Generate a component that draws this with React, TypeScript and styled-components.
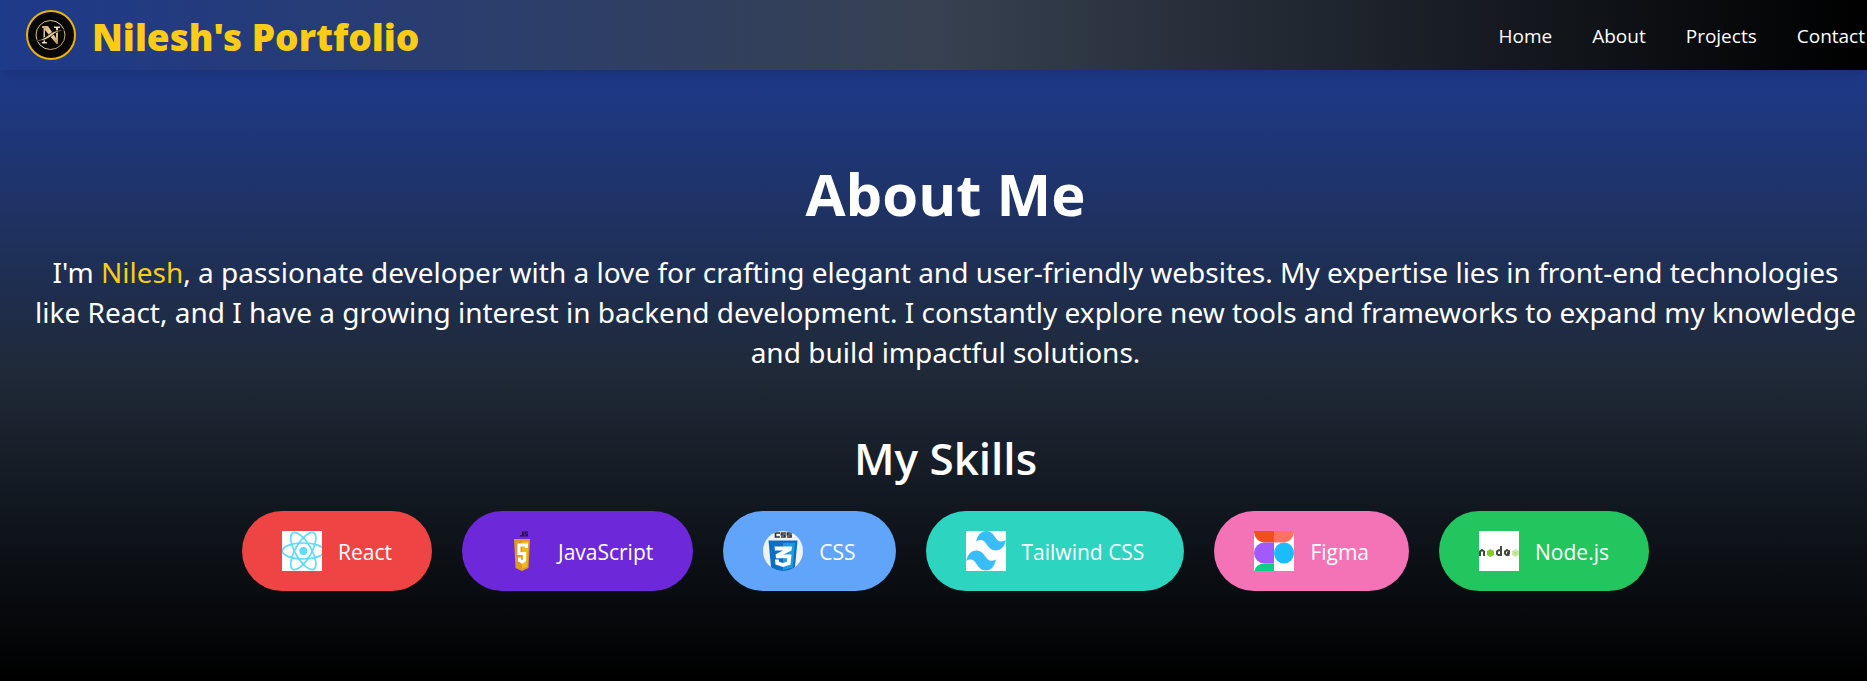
import React from "react";
import styled, { createGlobalStyle } from "styled-components";

const Global = createGlobalStyle`
  * { box-sizing: border-box; margin: 0; }
  body {
    margin: 0;
    background: #000;
    color: #fff;
    font-family: "Segoe UI", "Open Sans", "Noto Sans", sans-serif;
    overflow-x: hidden;
  }
`;

const Page = styled.div`
  min-height: 100vh;
  display: flex;
  flex-direction: column;
`;

const Header = styled.header`
  position: relative;
  display: flex;
  align-items: center;
  justify-content: space-between;
  height: 70px;
  padding-left: 26px;
  background: linear-gradient(to right, #1e3a8a, #374151, #000);
  box-shadow: 0 10px 15px -3px rgba(0, 0, 0, 0.1), 0 4px 6px -4px rgba(0, 0, 0, 0.1);
`;

const Brand = styled.a`
  display: flex;
  align-items: center;
  gap: 16px;
  color: #facc15;
  font-family: "Segoe UI", "Noto Sans", sans-serif;
  font-size: 37px;
  line-height: 40px;
  font-weight: 900;
  text-decoration: none;
`;

const BrandName = styled.span`
  padding-top: 4px;
`;

const Nav = styled.nav`
  display: flex;
  gap: 40px;
  padding: 2px 2px 0 0;
`;

const NavLink = styled.a`
  color: #fff;
  font-size: 19px;
  line-height: 28px;
  font-weight: 500;
  text-decoration: none;
`;

const Main = styled.main`
  flex: 1;
  display: flex;
  flex-direction: column;
  align-items: center;
  padding: 88px 0 88px 24px;
  text-align: center;
  background: linear-gradient(to bottom, #1e3a8a, #1f2937, #000);
`;

const Title = styled.h1`
  font-size: 58px;
  line-height: 72px;
  font-weight: 700;
`;

const Intro = styled.p`
  margin-top: 22px;
  padding: 0 6px;
  font-family: "Segoe UI", "Noto Sans", sans-serif;
  font-size: 28px;
  line-height: 40px;
`;

const Name = styled.span`
  color: #facc15;
`;

const SkillsTitle = styled.h2`
  margin-top: 58px;
  font-size: 44px;
  line-height: 56px;
  font-weight: 600;
`;

const Skills = styled.ul`
  display: flex;
  flex-wrap: wrap;
  justify-content: center;
  gap: 30px;
  margin-top: 25px;
  padding: 0;
  list-style: none;
`;

const Skill = styled.li<{ $color: string }>`
  display: flex;
  align-items: center;
  gap: 16px;
  padding: 20px 40px;
  border-radius: 40px;
  background: ${(p) => p.$color};
  font-size: 21px;
  line-height: 32px;
`;

const SkillName = styled.span`
  padding-top: 2px;
`;

const Icon = styled.svg`
  display: block;
  width: 40px;
  height: 40px;
  flex: none;
`;

const LogoMark = styled.svg`
  display: block;
  width: 50px;
  height: 50px;
`;

const Logo = () => (
  <LogoMark viewBox="0 0 50 50" aria-hidden="true">
    <defs>
      <linearGradient id="gold" x1="0" y1="0" x2="1" y2="1">
        <stop offset="0" stopColor="#c9a063" />
        <stop offset="0.5" stopColor="#f3e3bd" />
        <stop offset="1" stopColor="#a9783c" />
      </linearGradient>
    </defs>
    <circle cx="25" cy="25" r="24" fill="#080808" stroke="#eab308" strokeWidth="2" />
    <circle cx="24.500" cy="25" r="14.500" fill="none" stroke="url(#gold)" strokeWidth="1" />
    <path d="M16 16h6l8 12V18h-2v-1.500h6V18h-2v16h-1.500L19 20v12h2v1.500h-5V32h1.500V18H16z" fill="url(#gold)" />
    <path d="M5 29.500c8 2 13-1 18-5 4-3 8-5 17-4.500-8 1-11 3-15 6.500-5 4-12 6-20 3z" fill="#e3c794" stroke="#080808" strokeWidth="0.800" />
  </LogoMark>
);

const ReactIcon = () => (
  <Icon viewBox="0 0 40 40" aria-hidden="true">
    <rect width="40" height="40" fill="#fff" />
    <circle cx="21.300" cy="20" r="4" fill="#61dafb" />
    <g fill="none" stroke="#61dafb" strokeWidth="1.700">
      <ellipse cx="21.300" cy="20" rx="21" ry="8" />
      <ellipse cx="21.300" cy="20" rx="21" ry="8" transform="rotate(60 21.300 20)" />
      <ellipse cx="21.300" cy="20" rx="21" ry="8" transform="rotate(120 21.300 20)" />
    </g>
  </Icon>
);

const JsIcon = () => (
  <Icon viewBox="0 0 40 40" aria-hidden="true">
    <path d="M20 0.500h1.800v5h-3.800v-1.500h2zM22.500 0.500h3.500v1.300h-2v0.800h2v3h-3.800v-1.300h2v-0.700h-1.800z" fill="#24123f" />
    <path d="M12 8h16l-1.500 29-6.500 3-6.500-3z" fill="#dc9a29" />
    <path d="M20 10.500h6.500l-1.300 25-5.200 2.300z" fill="#f0b91c" />
    <path d="M24.500 17v-3h-7.500v8.500h5.500v7l-2.500 1.500-2.500-1.500v-3" fill="none" stroke="#fff" strokeWidth="3" />
  </Icon>
);

const CssIcon = () => (
  <Icon viewBox="0 0 40 40" aria-hidden="true">
    <defs>
      <clipPath id="disc"><circle cx="20" cy="20" r="20" /></clipPath>
    </defs>
    <g clipPath="url(#disc)">
      <rect width="40" height="40" fill="#f1f1f1" />
      <g fill="none" stroke="#333" strokeWidth="1.700">
        <path d="M17 2H12.500v4H17M23 2h-4.500v2H22v2h-4M29 2h-4.500v2H28v2h-4" />
      </g>
      <path d="M5.500 9.500h29l-2.700 29L20 42 8.200 38.500z" fill="#0c6fc4" />
      <path d="M20 12h12l-2.300 24.500L20 39z" fill="#1e9ae0" />
      <path d="M11.500 15.500h17.500l-0.500 4-8 4h8l-1 10-7.500 2.500-7.500-2.500-0.500-5h3.800l0.300 2.300 3.900 1.200 3.900-1.200 0.300-3.600H13l-0.400-4 7.400-3.700h-8z" fill="#fff" />
    </g>
  </Icon>
);

const TailwindIcon = () => (
  <Icon viewBox="0 0 40 40" aria-hidden="true">
    <rect width="40" height="40" fill="#fff" />
    <g fill="#38bdf8">
      <path d="M10 10.500Q12.500 0 20 0C31 0 28 15 40 9Q37.500 19.500 30 19.500C19 19.500 21.500 4.500 10 10.500z" />
      <path d="M0 30Q2.500 19.500 10 19.500C21 19.500 18.500 34 30 28.500Q27.500 39.500 20 39.500C9 39.500 11.500 24 0 30z" />
    </g>
  </Icon>
);

const FigmaIcon = () => (
  <Icon viewBox="0 0 40 40" aria-hidden="true">
    <rect width="40" height="40" fill="#fff" />
    <path d="M0 0h20v11.500h-9.500A10.500 11 0 0 1 0 0z" fill="#f24e1e" />
    <path d="M20 0h20a10.500 11 0 0 1-10.500 11.500H20z" fill="#ff7262" />
    <path d="M20 11.500v21h-9.500a10.500 10.500 0 0 1 0-21z" fill="#a259ff" />
    <ellipse cx="30" cy="22" rx="10" ry="10.500" fill="#1abcfe" />
    <path d="M20 32.500V40H0.500q1.500-7.500 10-7.500z" fill="#0acf83" />
  </Icon>
);

const NodeIcon = () => (
  <Icon viewBox="0 0 40 40" aria-hidden="true">
    <rect width="40" height="40" fill="#fff" />
    <g fill="none" stroke="#46483e" strokeWidth="2">
      <path d="M1 25v-4.500l2-1.500 2 1.500V25" />
      <path d="M22 15v9h-2.500L18 23v-2.500l1.500-1.300H22" />
      <path d="M30.500 24h-3L26 22.500V20.500l1.800-1.300 2.200 1V22h-2" />
    </g>
    <path d="M11.500 18l3.500 2v4l-3.500 2L8 24v-4z" fill="#83cd29" />
    <path d="M36.500 18l3.500 2v4l-3.500 2L33 24v-4z" fill="#cdeaa9" />
    <path d="M35 20.500l3 3M38 20.500l-3 3" stroke="#9bd45a" strokeWidth="0.800" />
  </Icon>
);

const links = ["Home", "About", "Projects", "Contact"];

const skills = [
  { label: "React", color: "#ef4444", icon: <ReactIcon /> },
  { label: "JavaScript", color: "#6d28d9", icon: <JsIcon /> },
  { label: "CSS", color: "#60a5fa", icon: <CssIcon /> },
  { label: "Tailwind CSS", color: "#2dd4bf", icon: <TailwindIcon /> },
  { label: "Figma", color: "#f472b6", icon: <FigmaIcon /> },
  { label: "Node.js", color: "#22c55e", icon: <NodeIcon /> },
];

export default function App() {
  return (
    <>
      <Global />
      <Page>
        <Header>
          <Brand href="#home">
            <Logo />
            <BrandName>Nilesh's Portfolio</BrandName>
          </Brand>
          <Nav aria-label="Main">
            {links.map((l) => (
              <NavLink key={l} href={`#${l.toLowerCase()}`}>{l}</NavLink>
            ))}
          </Nav>
        </Header>
        <Main>
          <Title>About Me</Title>
          <Intro>
            I'm <Name>Nilesh</Name>, a passionate developer with a love for crafting elegant and
            user-friendly websites. My expertise lies in front-end technologies like React, and I
            have a growing interest in backend development. I constantly explore new tools and
            frameworks to expand my knowledge and build impactful solutions.
          </Intro>
          <SkillsTitle>My Skills</SkillsTitle>
          <Skills>
            {skills.map((s) => (
              <Skill key={s.label} $color={s.color}>
                {s.icon}
                <SkillName>{s.label}</SkillName>
              </Skill>
            ))}
          </Skills>
        </Main>
      </Page>
    </>
  );
}
